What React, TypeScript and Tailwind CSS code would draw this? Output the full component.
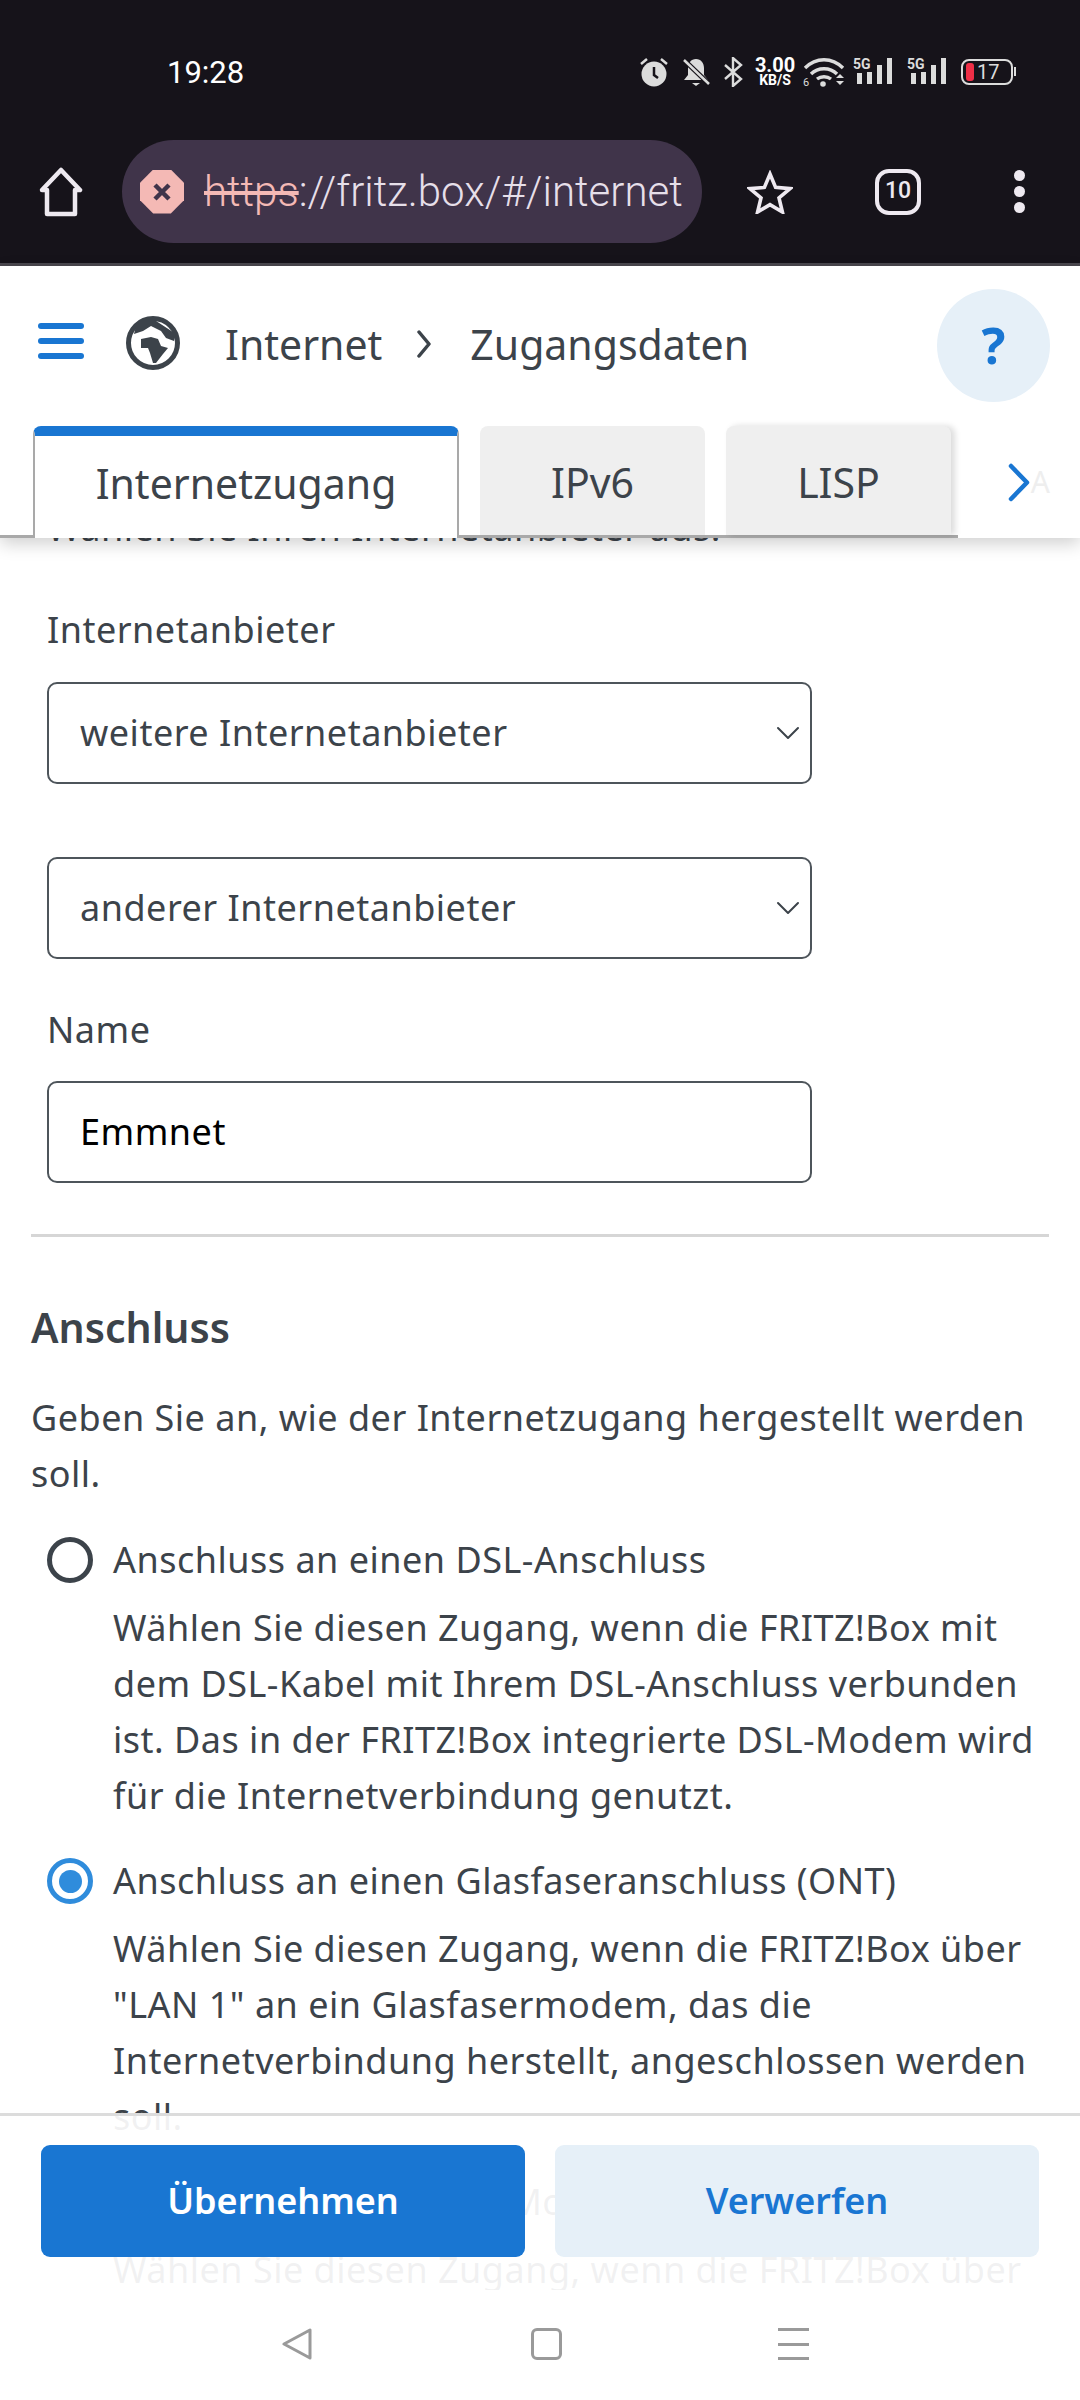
import { ChevronDown } from "lucide-react";

const font = { fontFamily: '"Noto Sans", sans-serif' };

const Signal = () => (
  <svg width="41" height="30" viewBox="0 0 41 30">
    <text x="0" y="12" fontSize="14" fontWeight="700" fill="#dcdcdc" fontFamily="Roboto">5G</text>
    <rect x="4" y="16" width="5" height="11" fill="#dcdcdc" />
    <rect x="14" y="15" width="5" height="12" fill="#dcdcdc" />
    <rect x="24" y="8" width="5" height="19" fill="#dcdcdc" />
    <rect x="34" y="1" width="5" height="26" fill="#dcdcdc" />
  </svg>
);

const StatusIcons = () => (
  <div className="flex items-center text-[#dcdcdc]">
    <svg width="30" height="30" viewBox="0 0 30 30" className="mr-[12px]">
      <circle cx="15" cy="17" r="12.5" fill="currentColor" />
      <path d="M15 10v8l4 3" stroke="#16131a" strokeWidth="2.5" fill="none" />
      <path d="M2 7l6-5M28 7l-6-5" stroke="currentColor" strokeWidth="2.5" />
    </svg>
    <svg width="30" height="30" viewBox="0 0 30 30" className="mr-[12px]">
      <path d="M15 2c-5 0-8 4-8 9v7l-4 5h24l-4-5v-7c0-5-3-9-8-9z" fill="currentColor" />
      <path d="M11 26h8l-4 3z" fill="currentColor" />
      <path d="M3 3l25 24" stroke="#16131a" strokeWidth="5" />
      <path d="M3 3l25 24" stroke="currentColor" strokeWidth="2.5" />
    </svg>
    <svg width="20" height="30" viewBox="0 0 20 30" className="mr-[11px]">
      <path d="M2 8l16 14-8 7V1l8 7L2 22" stroke="currentColor" strokeWidth="2.4" fill="none" />
    </svg>
    <div className="flex flex-col items-center mr-[7px] text-white font-bold w-[42px]" style={{ fontFamily: '"Roboto", sans-serif' }}>
      <span className="text-[20px] leading-[18px]">3.00</span>
      <span className="text-[14px] leading-[13px]">KB/S</span>
    </div>
    <svg width="42" height="30" viewBox="0 0 42 30" className="mr-[8px]">
      <path d="M2 11c11-11 27-11 38 0M8 17c7-7 19-7 26 0M14 22c4-3 10-3 14 0" stroke="currentColor" strokeWidth="3.4" fill="none" />
      <circle cx="20" cy="27" r="2.8" fill="currentColor" />
      <path d="M33 21l4-4 4 4zM33 24h8l-4 4z" fill="currentColor" />
      <text x="0" y="29" fontSize="11" fill="currentColor" fontFamily="Roboto">6</text>
    </svg>
    <Signal />
    <div className="w-[13px]" />
    <Signal />
    <div className="ml-[13px] relative flex items-center">
      <div className="w-[52px] h-[26px] border-[2px] border-[#dcdcdc] rounded-[8px] flex items-center pl-[3px]">
        <div className="w-[8px] h-[18px] bg-[#ef2f47] rounded-[3px]" />
        <span className="ml-[3px] text-[20px] leading-none text-[#dcdcdc]" style={{ fontFamily: '"Roboto", sans-serif' }}>17</span>
      </div>
      <div className="w-[2px] h-[9px] bg-[#dcdcdc] ml-[1px]" />
    </div>
  </div>
);

const BrowserBar = () => (
  <div className="h-[266px] shrink-0 bg-[#16131a] border-b-[3px] border-[#4a474e]" style={{ fontFamily: '"Roboto", sans-serif' }}>
    <div className="h-[140px] flex items-start pl-[167px] pr-[64px] pt-[56px] justify-between">
      <span className="text-[31px] leading-[34px] text-white">19:28</span>
      <StatusIcons />
    </div>
    <div className="flex items-center h-[103px]">
      <svg width="48" height="50" viewBox="0 0 48 50" className="ml-[37px]">
        <path d="M5 23L24 3l19 20h-5v24H10V23z" fill="none" stroke="#eee9f0" strokeWidth="4.5" strokeLinejoin="round" />
      </svg>
      <div className="ml-[37px] w-[580px] h-[103px] rounded-full bg-[#40344a] flex items-center pl-[18px] overflow-hidden">
        <div className="relative w-[44px] h-[44px] shrink-0 bg-[#f4b9b5]" style={{ clipPath: "polygon(30% 0,70% 0,100% 30%,100% 70%,70% 100%,30% 100%,0 70%,0 30%)" }}>
          <svg width="44" height="44" viewBox="0 0 44 44">
            <path d="M15 15l14 14M29 15L15 29" stroke="#40344a" strokeWidth="4.5" />
          </svg>
        </div>
        <div className="ml-[20px] w-[480px] overflow-hidden whitespace-nowrap text-[42px] leading-[60px] text-[#e6dfe9] font-light">
          <span className="text-[#f4b9b5] line-through">https</span>://fritz.box/#/internet
        </div>
      </div>
      <svg width="46" height="44" viewBox="0 0 46 44" className="ml-[45px]">
        <path d="M23 4l5.6 13.4 14.4 1.2-11 9.4 3.4 14L23 34.6 10.600 42 14 28 3 18.600l14.400-1.200z" fill="none" stroke="#eee9f0" strokeWidth="3.6" strokeLinejoin="miter" />
      </svg>
      <div className="ml-[82px] w-[46px] h-[46px] rounded-[14px] border-[4px] border-[#eee9f0] flex items-center justify-center text-[23px] font-medium text-[#eee9f0]">10</div>
      <div className="ml-[93px] flex flex-col gap-[5px]">
        <div className="w-[11px] h-[11px] rounded-full bg-[#eee9f0]" />
        <div className="w-[11px] h-[11px] rounded-full bg-[#eee9f0]" />
        <div className="w-[11px] h-[11px] rounded-full bg-[#eee9f0]" />
      </div>
    </div>
  </div>
);

const Globe = () => (
  <svg width="54" height="54" viewBox="0 0 54 54">
    <circle cx="27" cy="27" r="24.500" fill="#fff" stroke="#3c434a" strokeWidth="5" />
    <path d="M18 3l9 0 23 15-2 7-8-3-5-7-10-5-8 5-9 3 2-8z" fill="#3c434a" />
    <path d="M15 23l10-2 7 2 3 7 7 2-5 6-7 9h-3l-3-10-2-5-7 0z" fill="#3c434a" />
  </svg>
);

const AppHeader = () => (
  <div className="relative z-10 shrink-0 bg-white shadow-[0_6px_16px_rgba(0,0,0,0.18)] h-[272px]">
    <div className="flex items-center h-[160px] pb-[2px] text-[#3c434a]">
      <div className="ml-[38px] -mt-[8px] w-[46px] flex flex-col gap-[9px]">
        <div className="h-[6px] rounded-full bg-[#1976d2]" />
        <div className="h-[6px] rounded-full bg-[#1976d2]" />
        <div className="h-[6px] rounded-full bg-[#1976d2]" />
      </div>
      <div className="ml-[42px] -mt-[4px]"><Globe /></div>
      <span className="ml-[45px] text-[41px]">Internet</span>
      <svg width="15" height="28" viewBox="0 0 15 28" className="ml-[35px] -mt-[2px]">
        <path d="M2 2l10 12L2 26" fill="none" stroke="#3c434a" strokeWidth="3.5" strokeLinecap="round" strokeLinejoin="round" />
      </svg>
      <span className="ml-[38px] text-[41px]">Zugangsdaten</span>
      <div className="ml-auto mr-[30px] w-[113px] h-[113px] rounded-full bg-[#e6f0f8] flex items-center justify-center text-[50px] font-bold text-[#1976d2]">?</div>
    </div>
    <div className="absolute left-0 bottom-0 w-[958px] h-[112px] border-b-[3px] border-[#a9a9a9] flex items-end pl-[33px] gap-[21px] text-[#3c434a] text-[41px]">
      <div className="w-[426px] h-[112px] -mb-[3px] bg-white border-x-2 border-[#a9a9a9] border-t-[10px] border-t-[#1976d2] rounded-t-[8px] flex items-center justify-center pb-[6px]">Internetzugang</div>
      <div className="w-[225px] h-[109px] bg-[#efefef] rounded-t-[8px] flex items-center justify-center pt-[4px]">IPv6</div>
      <div className="w-[225px] h-[109px] bg-[#efefef] rounded-t-[8px] flex items-center justify-center pt-[4px] shadow-[4px_0_6px_rgba(0,0,0,0.14)]">LISP</div>
    </div>
    <div className="absolute right-[30px] bottom-[36px] flex items-center">
      <svg width="23" height="39" viewBox="0 0 23 39">
        <path d="M3 3l16 16.500L3 36" fill="none" stroke="#1976d2" strokeWidth="4.500" strokeLinecap="round" strokeLinejoin="round" />
      </svg>
      <span className="text-[30px] leading-[40px] text-[#eeeeee]">A</span>
    </div>
  </div>
);

const SelectBox = ({ label }: { label: string }) => (
  <div className="w-[765px] h-[102px] rounded-[10px] border-2 border-[#4e555b] flex items-center pl-[31px] pr-[2px] justify-between text-[#3c434a]">
    <span>{label}</span>
    <ChevronDown className="text-[#3c434a]" size={40} strokeWidth={1.2} />
  </div>
);

const RadioOption = ({ checked, label, lines }: { checked?: boolean; label: string; lines: string[] }) => (
  <div className="flex">
    <div className={`w-[46px] h-[46px] mt-[5px] ml-[47px] rounded-full border-[5px] flex items-center justify-center shrink-0 ${checked ? "border-[#2f8cdc]" : "border-[#3c434a]"}`}>
      {checked && <div className="w-[23px] h-[23px] rounded-full bg-[#2f8cdc]" />}
    </div>
    <div className="ml-[20px] mt-0 whitespace-nowrap">
      <div className="mb-[12px]">{label}</div>
      {lines.map((l) => <div key={l}>{l}</div>)}
    </div>
  </div>
);

const Content = () => (
  <div className="flex-1 overflow-hidden text-[36px] tracking-[0.5px] leading-[56px] text-[#3c434a]">
    <div className="-mt-[38px]">
      <div className="pl-[47px]">Wählen Sie Ihren Internetanbieter aus:</div>
      <div className="pl-[47px] mt-[46px]">Internetanbieter</div>
      <div className="pl-[47px] mt-[24px]"><SelectBox label="weitere Internetanbieter" /></div>
      <div className="pl-[47px] mt-[73px]"><SelectBox label="anderer Internetanbieter" /></div>
      <div className="pl-[47px] mt-[43px]">Name</div>
      <div className="pl-[47px] mt-[23px]">
        <div className="w-[765px] h-[102px] rounded-[10px] border-2 border-[#4e555b] flex items-center pl-[31px] text-black">Emmnet</div>
      </div>
      <div className="mx-[31px] mt-[51px] h-[3px] bg-[#d6d6d6]" />
      <div className="pl-[31px] mt-[62px] text-[41px] tracking-normal font-semibold leading-[56px]">Anschluss</div>
      <div className="pl-[31px] mt-[35px] whitespace-nowrap">
        <div>Geben Sie an, wie der Internetzugang hergestellt werden</div>
        <div>soll.</div>
      </div>
      <div className="mt-[30px] flex flex-col gap-[29px]">
        <RadioOption
          label="Anschluss an einen DSL-Anschluss"
          lines={[
            "Wählen Sie diesen Zugang, wenn die FRITZ!Box mit",
            "dem DSL-Kabel mit Ihrem DSL-Anschluss verbunden",
            "ist. Das in der FRITZ!Box integrierte DSL-Modem wird",
            "für die Internetverbindung genutzt.",
          ]}
        />
        <RadioOption
          checked
          label="Anschluss an einen Glasfaseranschluss (ONT)"
          lines={[
            "Wählen Sie diesen Zugang, wenn die FRITZ!Box über",
            "\"LAN 1\" an ein Glasfasermodem, das die",
            "Internetverbindung herstellt, angeschlossen werden",
            "soll.",
          ]}
        />
        <RadioOption
          label="Anschluss an externes Modem oder Router"
          lines={["Wählen Sie diesen Zugang, wenn die FRITZ!Box über"]}
        />
      </div>
    </div>
  </div>
);

const ActionBar = () => (
  <div className="absolute left-0 right-0 bottom-[110px] h-[177px] bg-white/[0.93] border-t-[3px] border-[#dcdcdc] flex gap-[30px] px-[41px] pt-[29px] text-[36px] font-semibold">
    <button className="flex-1 h-[112px] rounded-[9px] bg-[#1976d2] text-white">Übernehmen</button>
    <button className="flex-1 h-[112px] rounded-[9px] bg-[#e6f0f8] text-[#1976d2]">Verwerfen</button>
  </div>
);

const NavBar = () => (
  <div className="relative z-10 h-[110px] shrink-0 bg-white flex items-start justify-center pl-[9px] pt-[38px]">
    <svg width="32" height="32" viewBox="0 0 32 32"><path d="M29 2v28L3 16z" fill="none" stroke="#9a9a9a" strokeWidth="3" strokeLinejoin="round" /></svg>
    <div className="ml-[218px] w-[31px] h-[32px] rounded-[6px] border-[3px] border-[#9a9a9a]" />
    <div className="ml-[216px] flex flex-col justify-between w-[31px] h-[32px]">
      <div className="h-[3px] bg-[#9a9a9a]" />
      <div className="h-[3px] bg-[#9a9a9a]" />
      <div className="h-[3px] bg-[#9a9a9a]" />
    </div>
  </div>
);

export default function App() {
  return (
    <div className="relative w-[1080px] h-[2400px] flex flex-col overflow-hidden bg-white" style={font}>
      <BrowserBar />
      <AppHeader />
      <Content />
      <ActionBar />
      <NavBar />
    </div>
  );
}
